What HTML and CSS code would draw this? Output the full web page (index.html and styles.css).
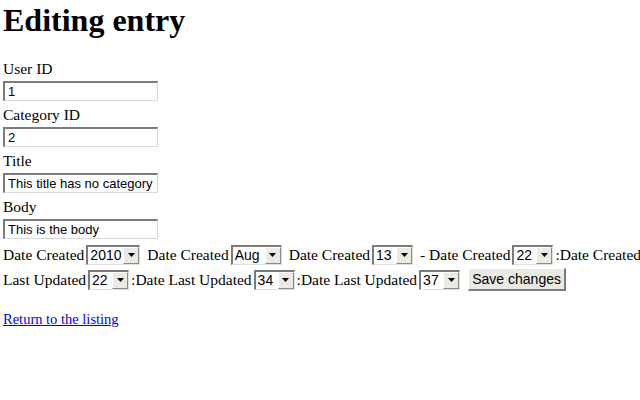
FILE: index.html
```html
<!DOCTYPE html>
<html>
<head>
<meta charset="utf-8">
<title>Editing entry</title>
<link rel="stylesheet" href="styles.css">
</head>
<body>
<h1 class="title">Editing entry</h1>
<form class="form">
  <div class="field">
    <label class="label" for="uid">User ID</label>
    <input class="text" id="uid" type="text" value="1">
  </div>
  <div class="field">
    <label class="label" for="cid">Category ID</label>
    <input class="text" id="cid" type="text" value="2">
  </div>
  <div class="field">
    <label class="label" for="ttl">Title</label>
    <input class="text" id="ttl" type="text" value="This title has no category">
  </div>
  <div class="field field-last">
    <label class="label" for="bdy">Body</label>
    <input class="text" id="bdy" type="text" value="This is the body">
  </div>
  <div class="row">
    <span class="lbl">Date Created</span>
    <span class="sel w54"><span class="val">2010</span><span class="arrow"><svg width="7" height="4" viewBox="0 0 7 4"><path d="M0 0H7L3.5 4Z" fill="#000"/></svg></span></span>
    <span class="lbl gap">Date Created</span>
    <span class="sel w51"><span class="val">Aug</span><span class="arrow"><svg width="7" height="4" viewBox="0 0 7 4"><path d="M0 0H7L3.5 4Z" fill="#000"/></svg></span></span>
    <span class="lbl gap">Date Created</span>
    <span class="sel w41"><span class="val">13</span><span class="arrow"><svg width="7" height="4" viewBox="0 0 7 4"><path d="M0 0H7L3.5 4Z" fill="#000"/></svg></span></span>
    <span class="lbl gap">- Date Created</span>
    <span class="sel w41"><span class="val">22</span><span class="arrow"><svg width="7" height="4" viewBox="0 0 7 4"><path d="M0 0H7L3.5 4Z" fill="#000"/></svg></span></span>
    <span class="lbl">:Date Created</span>
  </div>
  <div class="row">
    <span class="lbl">Last Updated</span>
    <span class="sel w41"><span class="val">22</span><span class="arrow"><svg width="7" height="4" viewBox="0 0 7 4"><path d="M0 0H7L3.5 4Z" fill="#000"/></svg></span></span>
    <span class="lbl">:Date Last Updated</span>
    <span class="sel w41"><span class="val">34</span><span class="arrow"><svg width="7" height="4" viewBox="0 0 7 4"><path d="M0 0H7L3.5 4Z" fill="#000"/></svg></span></span>
    <span class="lbl">:Date Last Updated</span>
    <span class="sel w41"><span class="val">37</span><span class="arrow"><svg width="7" height="4" viewBox="0 0 7 4"><path d="M0 0H7L3.5 4Z" fill="#000"/></svg></span></span>
    <button class="btn" type="button">Save changes</button>
  </div>
</form>
<a class="link" href="#">Return to the listing</a>
</body>
</html>
```
FILE: styles.css
```css
html, body {
  margin: 0;
  padding: 0;
  background: #fff;
  overflow: hidden;
}
body {
  padding: 0 3px;
  font-family: "Liberation Serif", "Times New Roman", serif;
  font-size: 15.5px;
  color: #000;
}
.title {
  margin: 0;
  padding-top: 2px;
  font-size: 32px;
  line-height: 37px;
  font-weight: bold;
  height: 58px;
}
.form {
  display: flex;
  flex-direction: column;
}
.field {
  display: flex;
  flex-direction: column;
  align-items: flex-start;
  height: 46px;
}
.field-last {
  height: 44px;
}
.label {
  line-height: 18px;
  height: 21px;
}
.text {
  box-sizing: border-box;
  width: 155px;
  height: 20px;
  margin: 0;
  padding: 0 3px;
  border-style: solid;
  border-width: 2px 1px 1px 2px;
  border-color: #7b7b7b #d8d8d8 #d8d8d8 #7b7b7b;
  font-family: "Liberation Sans", Arial, sans-serif;
  font-size: 13px;
  color: #000;
  background: #fff;
  outline: none;
}
.row {
  display: flex;
  align-items: center;
  white-space: nowrap;
  height: 25px;
}
.lbl {
  margin-right: 2px;
  flex: none;
}
.gap {
  margin-left: 5px;
}
.sel {
  box-sizing: border-box;
  display: inline-flex;
  align-items: stretch;
  height: 20px;
  border-style: solid;
  border-width: 2px 1px 1px 2px;
  border-color: #7b7b7b #e0e0e0 #e0e0e0 #7b7b7b;
  background: #fff;
  font-family: "Liberation Sans", Arial, sans-serif;
  font-size: 14px;
  margin-right: 2px;
  flex: none;
}
.w54 { width: 54px; }
.w51 { width: 51px; }
.w41 { width: 41px; }
.val {
  flex: 1;
  padding-left: 2px;
  line-height: 17px;
}
.arrow {
  box-sizing: border-box;
  width: 16px;
  display: flex;
  align-items: center;
  justify-content: center;
  background: #ece9e2;
  border-style: solid;
  border-width: 1px;
  border-color: #fff #8a8a8a #8a8a8a #fff;
}
.btn {
  margin-left: 6px;
  box-sizing: border-box;
  width: 98px;
  height: 23px;
  padding: 0;
  font-family: "Liberation Sans", Arial, sans-serif;
  font-size: 14px;
  color: #000;
  background: #ece9e2;
  border-style: solid;
  border-width: 1px 2px 2px 1px;
  border-color: #fff #7b7b7b #7b7b7b #fff;
}
.link {
  display: inline-block;
  margin-top: 19px;
  font-size: 14.5px;
  color: #0000ee;
  text-decoration: underline;
}
```
